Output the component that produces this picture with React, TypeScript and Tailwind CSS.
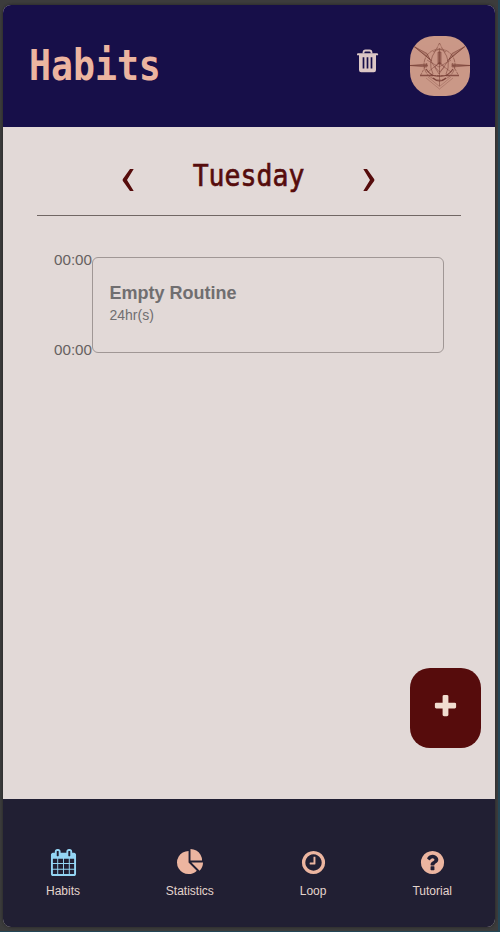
import React from "react";

const circle =
  "M1664 896q0 209-103 385.500t-279.500 279.500-385.500 103-385.500-103-279.500-279.500-103-385.500 103-385.500 279.500-279.500 385.500-103 385.500 103 279.500 279.500 103 385.500z";

const icons = {
  calendar:
    "M192 1664h288v-288h-288v288zm352 0h320v-288h-320v288zm-352-352h288v-320h-288v320zm352 0h320v-320h-320v320zm-352-384h288v-288h-288v288zm736 736h320v-288h-320v288zm-384-736h320v-288h-320v288zm768 736h288v-288h-288v288zm-384-352h320v-320h-320v320zm-352-864v-288q0-13-9.500-22.500t-22.500-9.500h-64q-13 0-22.500 9.500t-9.500 22.500v288q0 13 9.500 22.500t22.500 9.500h64q13 0 22.500-9.500t9.500-22.500zm736 864h288v-320h-288v320zm-384-384h320v-288h-320v288zm384 0h288v-288h-288v288zm32-480v-288q0-13-9.500-22.500t-22.500-9.500h-64q-13 0-22.500 9.500t-9.500 22.500v288q0 13 9.500 22.500t22.500 9.500h64q13 0 22.500-9.500t9.500-22.500zm384-64v1280q0 52-38 90t-90 38h-1408q-52 0-90-38t-38-90v-1280q0-52 38-90t90-38h128v-96q0-66 47-113t113-47h64q66 0 113 47t47 113v96h384v-96q0-66 47-113t113-47h64q66 0 113 47t47 113v96h128q52 0 90 38t38 90z",
  pie: "M768 890l546 546q-106 108-247.500 168t-298.500 60q-209 0-385.500-103t-279.500-279.500-103-385.500 103-385.500 279.500-279.500 385.500-103v762zm187 6h773q0 157-60 298.500t-168 247.500zm709-128h-768v-768q209 0 385.500 103t279.500 279.500 103 385.500z",
  clock:
    "M1024 544v448q0 14-9 23t-23 9h-320q-14 0-23-9t-9-23v-64q0-14 9-23t23-9h224v-352q0-14 9-23t23-9h64q14 0 23 9t9 23zm416 352q0-148-73-273t-198-198-273-73-273 73-198 198-73 273 73 273 198 198 273 73 273-73 198-198 73-273z" +
    circle,
  question:
    "M1024 1376v-192q0-14-9-23t-23-9h-192q-14 0-23 9t-9 23v192q0 14 9 23t23 9h192q14 0 23-9t9-23zm256-672q0-88-55.500-163t-138.500-116-170-41q-243 0-371 213-15 24 8 42l132 100q7 6 19 6 16 0 25-12 53-68 86-92 34-24 86-24 48 0 85.500 26t37.500 59q0 38-20 61t-68 45q-63 28-115.500 86.500t-52.500 125.500v36q0 14 9 23t23 9h192q14 0 23-9t9-23q0-19 21.500-49.500t54.500-49.500q32-18 49-28.500t46-35 44.500-48 28-60.500 12.500-81z" +
    circle,
  plus: "M1600 736v192q0 40-28 68t-68 28h-416v416q0 40-28 68t-68 28h-192q-40 0-68-28t-28-68v-416h-416q-40 0-68-28t-28-68v-192q0-40 28-68t68-28h416v-416q0-40 28-68t68-28h192q40 0 68 28t28 68v416h416q40 0 68 28t28 68z",
};

function Glyph({ d, className }: { d: string; className: string }) {
  return (
    <svg viewBox="0 0 1792 1792" fill="currentColor" fillRule="evenodd" className={className}>
      <path d={d} />
    </svg>
  );
}

function Trash() {
  return (
    <svg width="22" height="24" viewBox="0 0 22 24" className="text-[#dcc7c5]">
      <path d="M6.500 4.500V3.500Q6.500 1.500 8.500 1.500h4q2 0 2 2v1" fill="none" stroke="currentColor" strokeWidth="1.800" />
      <path d="M1 4.200h19q1 0 1 1v1H0v-1q0-1 1-1z" fill="currentColor" />
      <path d="M2 5.500h17v15.600q0 2.200-2.200 2.200H4.200q-2.200 0-2.200-2.200z" fill="currentColor" />
      <path d="M6.500 8.300v11.200M10.500 8.300v11.200M14.500 8.300v11.200" stroke="#170f49" strokeWidth="1.700" />
    </svg>
  );
}

function Emblem() {
  return (
    <svg viewBox="0 0 60 60" className="size-[60px] shrink-0 rounded-[24px] bg-[#ca9887] text-[#70372f]" fill="none" stroke="currentColor" strokeWidth=".65">
      <g opacity=".75">
        <circle cx="29.500" cy="28.500" r="15.500" strokeDasharray="5 .6" />
        <path d="M29.500 7 33 14M29.500 7 26 14M17 27 10.500 39.500H48.500L42 27" strokeDasharray="3 .8" />
        <path d="M10 39.500h13M36 39.500h13" strokeWidth="1.300" />
        <path d="M29.500 12v38M23 16q6.500-5 13 0M26 14q-9 12-3 24M33 14q9 12 3 24" />
      </g>
      <path d="M4 10.500 20 23.500 17 17.500zM55 10.500 39 23.500l3-6zM0 29.500l17-1.500v3zM60 29.500 42 28v3z" fill="currentColor" fillOpacity=".35" opacity=".8" />
      <path d="m5 11 17 14M54 11 37 25M0 29.500h18M42 29.500h18" opacity=".75" />
      <path d="M28 16h3v12h-3z" fill="currentColor" fillOpacity=".55" opacity=".8" />
      <path d="m17 24 12 7 12-7M18 36l11-9 12 9M19 22l10 16 11-16M25 31l4.500 5 5-5-5-5z" opacity=".65" />
      <path d="M16 33q5 8 13.500 7Q38 41 43 33M23 42q3 3 6.500 3t6.500-3" strokeWidth="1.200" opacity=".8" />
      <path d="M16 42 29.500 53 43 42M18 41l11.500 9.500L41 41" strokeWidth=".7" opacity=".4" />
    </svg>
  );
}

const tabs = [
  { name: "Habits", icon: icons.calendar, look: "text-[#94d5f4]" },
  { name: "Statistics", icon: icons.pie, look: "ml-px text-[#ecb5a0]" },
  { name: "Loop", icon: icons.clock, look: "text-[#ecb5a0]" },
  { name: "Tutorial", icon: icons.question, look: "text-[#ecb5a0]" },
];

function Chevron({ flip = false }: { flip?: boolean }) {
  return (
    <button aria-label={flip ? "Next day" : "Previous day"}>
      <svg width="12" height="22" viewBox="0 0 12 22" fill="currentColor" className={flip ? "-scale-x-100" : ""}>
        <path d="M8 0H11.700L5 11 11.700 22H8L.7 11.700V10.300z" />
      </svg>
    </button>
  );
}

export default function App() {
  return (
    <div className="h-[932px] w-[500px] overflow-hidden border-r-2 border-b border-[#244656] bg-[#3c3c3c] pt-[5px] pl-[3px] font-['Liberation_Sans',sans-serif]">
      <div className="flex h-[922px] w-[492px] flex-col overflow-hidden rounded-lg bg-[#e2d9d7] shadow-[0_0_3px_#222]">
        <header className="flex h-[122px] shrink-0 items-center bg-[#170f49] pr-[25px] pl-[26px]">
          <h1 className="origin-center scale-y-[1.16] font-['DejaVu_Sans_Mono',monospace] text-[36.500px] leading-[44px] font-bold text-[#ecb5a0]">Habits</h1>
          <button aria-label="Delete" className="mr-[31px] mb-[11px] ml-auto">
            <Trash />
          </button>
          <Emblem />
        </header>

        <main className="flex min-h-0 flex-1 flex-col">
          <div className="mx-[34px] flex h-[89px] shrink-0 items-start justify-between border-b border-[#716764] pr-[86px] pl-[85px] text-[#560c0c]">
            <div className="mt-[42px]"><Chevron /></div>
            <h2 className="mt-[33px] origin-center scale-y-[1.14] font-['DejaVu_Sans_Mono',monospace] text-[26.500px] leading-8 [-webkit-text-stroke:0.6px_#560c0c]">Tuesday</h2>
            <div className="mt-[42px]"><Chevron flip /></div>
          </div>
          <section className="mt-[41px] ml-[51px] flex h-[97px]">
            <div className="-mt-[5px] flex h-[106px] w-[38px] shrink-0 flex-col justify-between text-[15.200px] leading-4 text-[#666161]">
              <span>00:00</span>
              <span>00:00</span>
            </div>
            <article className="h-[96px] w-[352px] rounded-md border border-[#a09795] pt-[25px] pl-[16.500px] text-[#706e70]">
              <h3 className="text-[18px] leading-5 font-bold">Empty Routine</h3>
              <p className="mt-[4px] text-[14px] leading-4">24hr(s)</p>
            </article>
          </section>
          <button aria-label="Add routine" className="mt-auto mr-[14px] mb-[51px] flex h-20 w-[71px] items-center justify-center self-end rounded-[20px] bg-[#560c0c] text-[#f1ddd0]">
            <Glyph d={icons.plus} className="mb-[4px] size-[27px]" />
          </button>
        </main>

        <nav className="flex h-[128px] shrink-0 items-start justify-between bg-[#211f33] px-[43px] pt-[50px]">
          {tabs.map((tab) => (
            <button key={tab.name} className="flex flex-col items-center text-[12px] leading-[14px] text-[#e4d4cd]">
              <Glyph d={tab.icon} className={`mb-[8px] size-[27px] ${tab.look}`} />
              {tab.name}
            </button>
          ))}
        </nav>
      </div>
    </div>
  );
}
